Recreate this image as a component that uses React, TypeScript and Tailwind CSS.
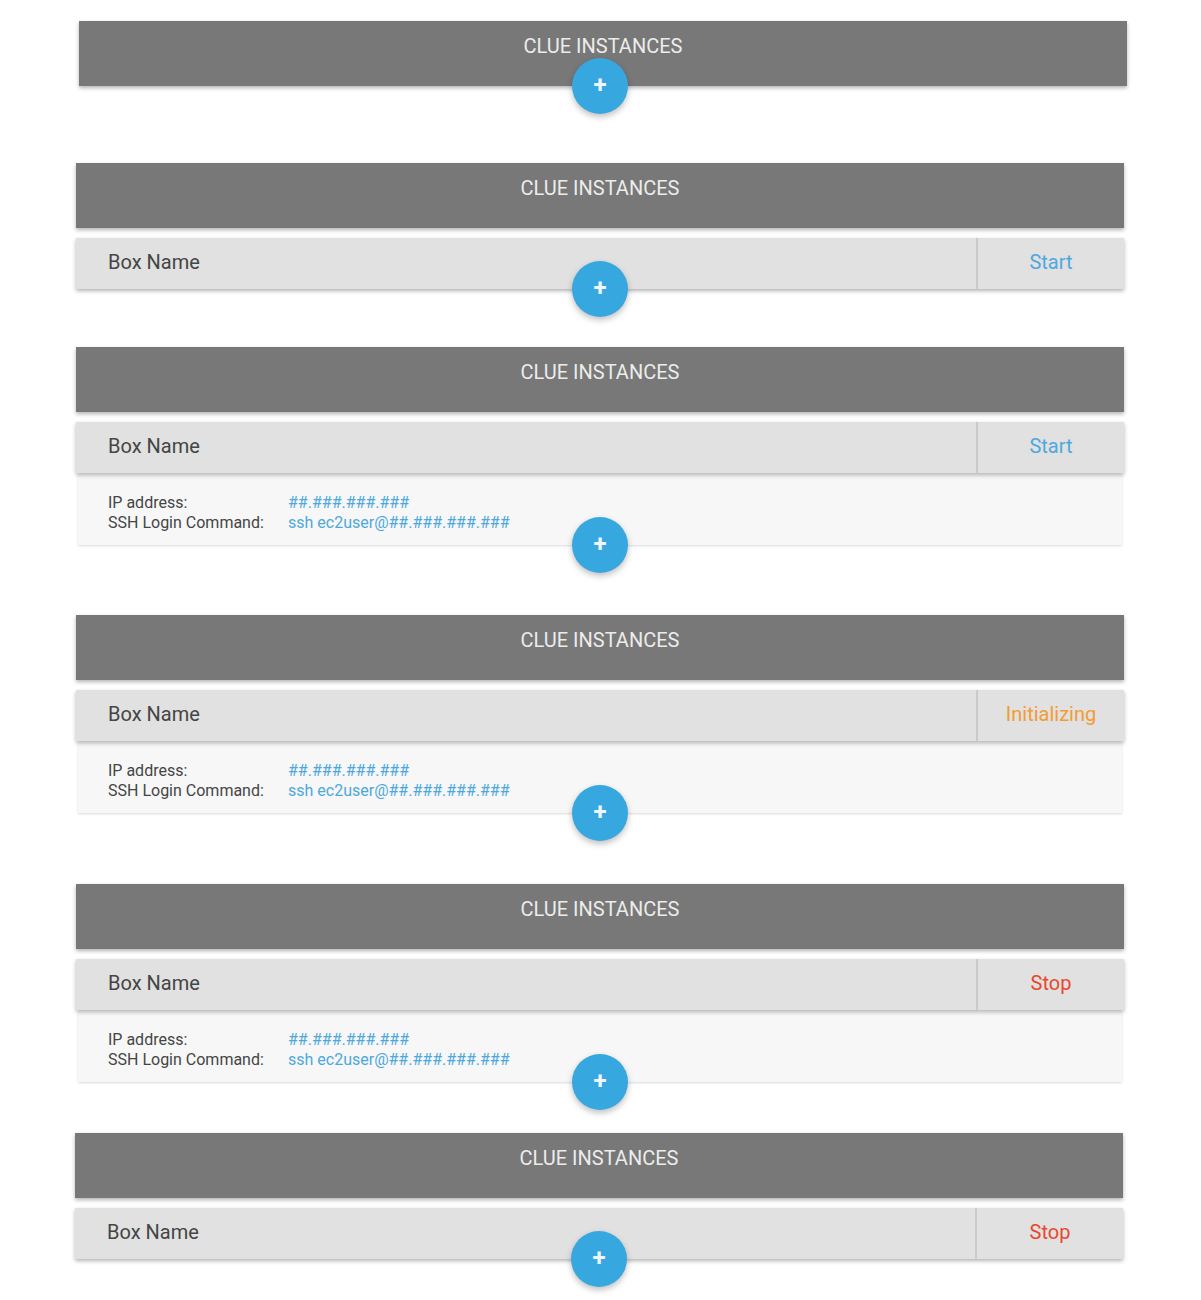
import React from "react";

type Status = "Start" | "Initializing" | "Stop";

const statusColor: Record<Status, string> = {
  Start: "text-[#4ea8de]",
  Initializing: "text-[#f39c35]",
  Stop: "text-[#e9472f]",
};

function Block({
  mt,
  ml,
  status,
  details,
  btnShift,
}: {
  mt: string;
  ml: string;
  status?: Status;
  details?: boolean;
  btnShift?: boolean;
}) {
  return (
    <div className={`relative w-[1048px] ${mt} ${ml}`}>
      <div className="h-[65px] bg-[#777877] shadow-[0_2px_4px_rgba(0,0,0,0.3)] pt-[12px] text-center text-[20px] leading-[26px] text-[#ececec]">
        CLUE INSTANCES
      </div>
      {status && (
        <div className="mt-[10px] flex h-[51px] bg-[#e0e1e0] shadow-[0_2px_4px_rgba(0,0,0,0.3)] relative z-10">
          <div className="flex flex-1 items-center pl-[32px] pb-[3px] text-[20px] text-[#444544]">Box Name</div>
          <div
            className={`flex w-[148px] items-center justify-center pb-[3px] border-l-2 border-[#c9cac9] text-[20px] ${statusColor[status]}`}
          >
            {status}
          </div>
        </div>
      )}
      {details && (
        <div className="mx-[2px] mt-[2px] h-[70px] bg-[#f6f7f6] shadow-[0_1px_2px_rgba(0,0,0,0.15)] pl-[30px] pt-[18px] text-[16px] leading-[19.5px]">
          <div className="flex">
            <span className="w-[180px] text-[#454545]">IP address:</span>
            <span className="text-[#4ea8de]">##.###.###.###</span>
          </div>
          <div className="flex">
            <span className="w-[180px] text-[#454545]">SSH Login Command:</span>
            <span className="text-[#4ea8de]">ssh ec2user@##.###.###.###</span>
          </div>
        </div>
      )}
      <button
        className={`absolute bottom-0 z-20 flex h-[56px] w-[56px] translate-y-1/2 items-center justify-center rounded-full bg-[#36a7df] text-[24px] font-bold leading-none text-[#eef6fb] shadow-[0_3px_6px_rgba(0,0,0,0.25)] ${
          btnShift ? "left-[493px]" : "left-[496px]"
        }`}
      >
        <span className="-mt-[2px]">+</span>
      </button>
    </div>
  );
}

export default function App() {
  return (
    <div className="min-h-[1300px] w-[1201px] bg-white pt-[21px] font-['Roboto','Liberation_Sans',sans-serif]">
      <Block mt="mt-0" ml="ml-[79px]" btnShift />
      <Block mt="mt-[77px]" ml="ml-[76px]" status="Start" />
      <Block mt="mt-[58px]" ml="ml-[76px]" status="Start" details />
      <Block mt="mt-[70px]" ml="ml-[76px]" status="Initializing" details />
      <Block mt="mt-[71px]" ml="ml-[76px]" status="Stop" details />
      <Block mt="mt-[51px]" ml="ml-[75px]" status="Stop" />
    </div>
  );
}
